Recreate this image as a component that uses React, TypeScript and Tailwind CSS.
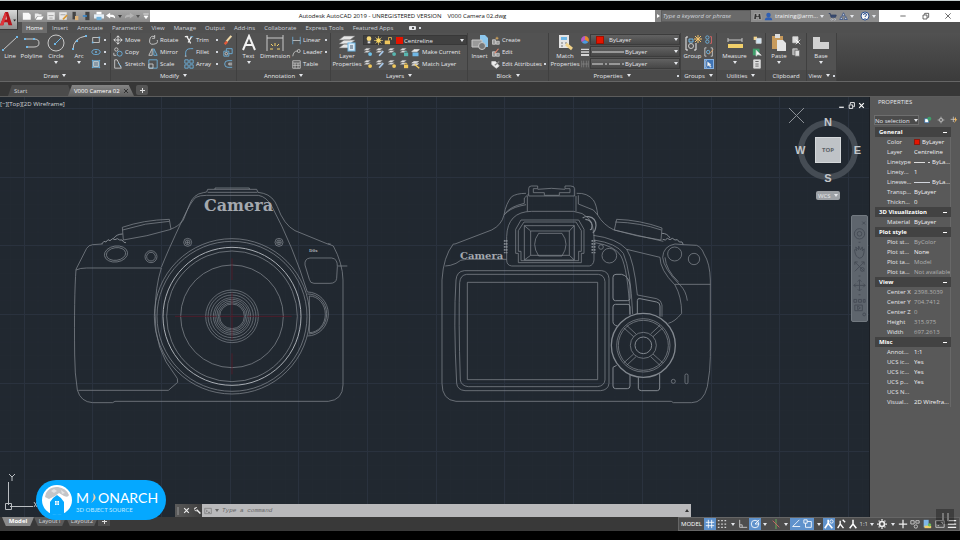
import type { ReactNode } from "react";

const Caret = ({ className = "text-gray-200" }: { className?: string }) => (
  <svg viewBox="0 0 4 3" className={`w-1 h-[3px] shrink-0 ${className}`} aria-hidden="true">
    <path d="M0 0H4L2 3Z" fill="currentColor" />
  </svg>
);

const Icon = ({ children, className = "size-3" }: { children: ReactNode; className?: string }) => (
  <svg viewBox="0 0 12 12" className={`shrink-0 ${className}`} fill="none" stroke="#d4d4d4" strokeWidth="1" aria-hidden="true">
    {children}
  </svg>
);

const BigIcon = ({ children }: { children: ReactNode }) => (
  <svg viewBox="0 0 18 18" className="size-[18px] shrink-0" fill="none" stroke="#c8c8c8" strokeWidth="1" aria-hidden="true">
    {children}
  </svg>
);

/* ---------- ribbon building blocks ---------- */

function Panel({ title, width, arrow = true, corner = false, children }: { title: string; width: string; arrow?: boolean; corner?: boolean; children: ReactNode }) {
  return (
    <section className={`${width} shrink-0 flex flex-col bg-[#525252] border-r border-[#404040]`}>
      <div className="flex h-[38px] pt-px">{children}</div>
      <button className={`relative flex items-center justify-center gap-1 h-[11px] bg-[#4a4a4a] text-gray-200 ${corner ? "pr-[5px]" : ""}`}>
        {title}
        {arrow && <Caret />}
        {corner && <span className="absolute right-px size-[2px] bg-gray-300" />}
      </button>
    </section>
  );
}

function BigButton({ icon, lines, arrow = false, width }: { icon: ReactNode; lines: string[]; arrow?: boolean; width: string }) {
  return (
    <button className={`${width} shrink-0 flex flex-col items-center whitespace-nowrap`}>
      {icon}
      {lines.map((line) => (
        <span key={line} className="leading-[8px]">{line}</span>
      ))}
      {arrow && <Caret className="mt-px text-gray-200" />}
    </button>
  );
}

function SmallButton({ icon, label, arrow = false }: { icon: ReactNode; label?: string; arrow?: boolean }) {
  return (
    <button className="flex items-center gap-[2px] h-3 whitespace-nowrap" aria-label={label ?? "tool"}>
      {icon}
      {label && <span className="flex-1 text-left">{label}</span>}
      {arrow && <span className="w-1 flex justify-center"><span className="size-[2px] bg-gray-300" /></span>}
    </button>
  );
}

const Column = ({ children, className = "" }: { children: ReactNode; className?: string }) => (
  <div className={`flex flex-col shrink-0 ${className}`}>{children}</div>
);

const B = "#6fb7e6";

const Dot = ({ x, y }: { x: number; y: number }) => <rect x={x - 1} y={y - 1} width="2" height="2" fill={B} stroke="none" />;

function LayerTool({ accent, kind = 0 }: { accent: string; kind?: number }) {
  return (
    <button className="size-3" aria-label="Layer tool">
      <Icon className="size-[10px]">
        <path d="M1 4L4 1.500H9L6 4Z M1 6.500L4 4.500H9L6 6.500Z" fill="#e2e2e2" stroke="#777" strokeWidth=".4" />
        {kind === 0 && <circle cx="8.500" cy="8.500" r="2.300" fill={accent} stroke="none" />}
        {kind === 1 && <path d="M5 10.500L10 5" stroke={accent} strokeWidth="2" />}
        {kind === 2 && <><rect x="6" y="7" width="5" height="4" fill={accent} stroke="none" /><path d="M7 7V5.500H9.500V7" stroke={accent} /></>}
      </Icon>
    </button>
  );
}

/* ---------- title bar ---------- */

const tabs = ["Home", "Insert", "Annotate", "Parametric", "View", "Manage", "Output", "Add-ins", "Collaborate", "Express Tools", "Featured Apps"];

function Header() {
  return (
    <header className="flex h-[23px] bg-[#505050]">
      <button className="w-[18px] h-[20px] shrink-0 bg-linear-to-b from-[#d9d9d9] to-[#8e8e8e] border-r border-b border-[#3a3a3a]" aria-label="Application menu">
        <svg viewBox="0 0 18 20" className="w-[17px] h-[19px]" aria-hidden="true">
          <path d="M0 16L5.500 2H8.500L13 16H9L8 13H4.500L3.500 16Z" fill="#b3141b" />
          <path d="M5.500 10H7.500L6.500 6Z" fill="#d4d4d4" />
          <path d="M0 16L5.500 2L7 5L3.500 16Z" fill="#e0343a" />
          <path d="M14 10H17L15.500 12Z" fill="#222" />
        </svg>
      </button>
      <div className="flex-1 min-w-0 flex flex-col">
        <div className="flex h-3 bg-white">
          <div className="w-[132px] shrink-0 flex items-center gap-[2px] pl-1 bg-linear-to-b from-[#a8a8a8] to-[#8a8a8a]">
            <Icon className="size-[10px]"><path d="M1 2H8L10.500 4.500V10.500H1Z" fill="#f8f8f8" stroke="none" /></Icon>
            <Icon className="size-[10px]"><path d="M1 10V3H5L6 4H9V6H4Z" fill="#ececec" stroke="none" /><path d="M2 10.500L4.500 6.500H11.500L9 10.500Z" fill="#fff" stroke="none" /></Icon>
            <Icon className="size-[10px]"><path d="M1.500 1.500H10.500V10.500H1.500Z" fill="#e8e8e8" stroke="none" /><path d="M3 5.500H9 M4 8.500H8" stroke="#999" /></Icon>
            <Icon className="size-[10px]"><path d="M1.500 1.500H10.500V10.500H1.500Z" fill="#e8e8e8" stroke="none" /><path d="M3 4.500H9" stroke="#999" /><path d="M6 10L11 5" stroke="#d99a35" strokeWidth="2" /></Icon>
            <Icon className="size-[10px]"><path d="M3 1H7V10H3Z" fill="#444" stroke="none" /><path d="M6 6H10V11H6Z" fill="#dcb27a" stroke="none" /></Icon>
            <Icon className="size-[10px]"><path d="M4 1H9V11H4Z" fill="#444" stroke="none" /><path d="M1 6H6" stroke="#3a87c8" strokeWidth="2" /></Icon>
            <Icon className="size-[10px]"><path d="M3 1H9V4H3Z" fill="#fff" stroke="none" /><path d="M0 4H12V9H0Z" fill="#e4eef5" stroke="none" /><path d="M3 7H9V11H3Z" fill="#6fb0da" stroke="none" /></Icon>
            <Icon className="size-[10px]"><path d="M0 5.500L5 2V4.500H8Q11 5 11 9Q9.500 7 5 7V9Z" fill="#fff" stroke="none" /></Icon>
            <Caret className="text-[#444]" />
            <Icon className="size-[10px]"><path d="M12 5.500L7 2V4.500H4Q1 5 1 9Q2.500 7 7 7V9Z" fill="#b4b4b4" stroke="none" /></Icon>
            <Caret className="text-[#555]" />
            <Icon className="size-2"><path d="M2 3H10 M3 6H9L6 10Z" fill="#fff" stroke="#fff" /></Icon>
          </div>
          <div className="flex-1 flex items-center justify-center gap-[6px] text-[#111] whitespace-nowrap">
            <span>Autodesk AutoCAD 2019 - UNREGISTERED VERSION</span>
            <span>V000 Camera 02.dwg</span>
          </div>
          <span className="w-[6px] shrink-0 flex items-center justify-center bg-[#858585]">
            <svg viewBox="0 0 3 4" className="w-[3px] h-1" aria-hidden="true"><path d="M0 0V4L3 2Z" fill="#fff" /></svg>
          </span>
          <input
            aria-label="Search help"
            placeholder="Type a keyword or phrase"
            className="w-[90px] shrink-0 px-px italic bg-[#6a6a6a] border border-[#5c5c5c] placeholder:text-gray-300 placeholder:opacity-100"
          />
          <div className="w-[128px] shrink-0 flex items-center gap-[2px] pl-[2px] bg-[#8c8c8c] text-gray-100">
            <Icon className="size-[9px]"><path d="M2 2H5V5H7V2H10L11 10H7.500V7H4.500V10H1Z" fill="#333" stroke="#ddd" strokeWidth=".6" /></Icon>
            <Icon className="size-[9px]"><circle cx="6" cy="4" r="3" fill="#2f5fb3" stroke="none" /><path d="M1 11Q1 7 6 7T11 11Z" fill="#2f5fb3" stroke="none" /></Icon>
            <span>training@arm...</span>
            <Caret />
            <span className="flex items-center gap-[2px] pl-[2px]">
              <Icon className="size-[9px]"><path d="M1 2H3L4 7H10L11 4H3.500" fill="#3c4e74" stroke="#2c3d60" /><circle cx="5" cy="10" r="1" fill="#2c3d60" /><circle cx="9" cy="10" r="1" fill="#2c3d60" /></Icon>
              <Icon className="size-[9px]"><path d="M6 1L8 5H4Z M3 6L5 10H1Z M9 6L11 10H7Z" stroke="#2c4a80" fill="#d6dce8" /></Icon>
              <Caret />
            </span>
            <svg viewBox="0 0 10 10" className="size-[10px] shrink-0 ml-1" aria-hidden="true">
              <circle cx="5" cy="5" r="4" fill="#f4f4f4" stroke="#2b4f8e" />
              <path d="M3.500 4Q3.500 2.500 5 2.500T6.500 4Q6.500 4.800 5 5.500V6 M5 7V8" fill="none" stroke="#2b4f8e" />
            </svg>
            <Caret />
          </div>
          <div className="w-[81px] shrink-0 flex items-center justify-between pl-5 pr-2">
            <button aria-label="Minimize" className="size-2"><Icon className="size-2"><path d="M2 6H10" stroke="#222" /></Icon></button>
            <button aria-label="Restore" className="size-2"><Icon className="size-2"><path d="M1.500 4.500H7.500V10.500H1.500Z M4 4V2H10V8H8" stroke="#222" /></Icon></button>
            <button aria-label="Close" className="size-2"><Icon className="size-2"><path d="M2 2L10 10M10 2L2 10" stroke="#222" /></Icon></button>
          </div>
        </div>
        <nav className="flex h-[11px] items-stretch pl-1 text-gray-300">
          {tabs.map((tab, i) => (
            <button key={tab} className={i === 0 ? "px-1 bg-[#6c6c6c] text-white" : "pl-[5px] pr-1"}>{tab}</button>
          ))}
          <button aria-label="Ribbon display" className="flex items-center gap-[3px] pl-3">
            <span className="w-[7px] h-1 rounded-[1px] bg-gray-200 flex items-center justify-center"><span className="size-[2px] bg-[#555]" /></span>
            <span className="size-[2px] bg-gray-300" />
          </button>
        </nav>
      </div>
    </header>
  );
}

function LineCombo({ label, dash }: { label: string; dash?: string }) {
  return (
    <div className="relative flex items-center h-[11px]">
      <select aria-label={dash ? "Linetype" : "Lineweight"} className="appearance-none w-full h-[11px] pl-[34px] bg-linear-to-b from-[#626262] to-[#474747] border border-[#3c3c3c] text-gray-200">
        <option>{label}</option>
      </select>
      <svg viewBox="0 0 32 2" className="absolute left-[2px] w-8 h-[2px]" aria-hidden="true"><path d="M0 1H32" stroke="#ddd" strokeDasharray={dash} /></svg>
      <span className="absolute right-[2px]"><Caret /></span>
    </div>
  );
}

function Ribbon() {
  return (
    <div className="flex h-[49px] bg-linear-to-b from-[#515151] to-[#3b3b3b] border-b border-[#666] text-gray-200 overflow-hidden">
      <Panel title="Draw" width="w-[111px]">
        <BigButton width="w-5" lines={["Line"]} icon={<BigIcon><path d="M2 16L16 3" /><Dot x={2} y={16} /><Dot x={16} y={3} /></BigIcon>} />
        <BigButton width="w-[23px]" lines={["Polyline"]} icon={<BigIcon><path d="M2 5H11Q16 5 16 9T11 13H4" /><Dot x={2} y={5} /><Dot x={11} y={5} /><Dot x={4} y={13} /></BigIcon>} />
        <BigButton width="w-[26px]" arrow lines={["Circle"]} icon={<BigIcon><circle cx="9" cy="9" r="8" /><path d="M8 10L14 4" stroke={B} /><Dot x={8} y={10} /></BigIcon>} />
        <BigButton width="w-5" arrow lines={["Arc"]} icon={<BigIcon><path d="M3 16Q3 4 16 2" /><Dot x={3} y={15} /><Dot x={7} y={7} /><Dot x={16} y={2} /></BigIcon>} />
        <Column className="pl-[2px]">
          <SmallButton arrow icon={<Icon className="size-[10px]"><path d="M2 3H10V9H2Z" /><Dot x={2} y={9} /><Dot x={10} y={3} /></Icon>} />
          <SmallButton arrow icon={<Icon className="size-[10px]"><ellipse cx="6" cy="6" rx="5" ry="3" stroke={B} /><Dot x={6} y={6} /></Icon>} />
          <SmallButton arrow icon={<Icon className="size-[10px]"><path d="M3 3H9V9H3Z" fill="#8a9aa6" /><path d="M1 2H11M1 10H11M2 1V11M10 1V11" stroke={B} /></Icon>} />
        </Column>
      </Panel>

      <Panel title="Modify" width="w-[126px]">
        <Column className="pl-[2px] w-[37px]">
          <SmallButton label="Move" icon={<Icon className="size-[10px]"><path d="M6 1V11M1 6H11M4 3L6 1L8 3M4 9L6 11L8 9M3 4L1 6L3 8M9 4L11 6L9 8" stroke="#eee" /></Icon>} />
          <SmallButton label="Copy" icon={<Icon className="size-[10px]"><circle cx="4" cy="3" r="2" /><circle cx="8" cy="8" r="3" stroke={B} /><path d="M1 7V10H4" /></Icon>} />
          <SmallButton label="Stretch" icon={<Icon className="size-[10px]"><path d="M2 1V11H10L5 1Z" /><path d="M6 5L10 9" stroke={B} /></Icon>} />
        </Column>
        <Column className="w-9">
          <SmallButton label="Rotate" icon={<Icon className="size-[10px]"><path d="M8 2Q3 0 2 6T7 11T11 6M8 0V4H5" /></Icon>} />
          <SmallButton label="Mirror" icon={<Icon className="size-[10px]"><path d="M5 2V10H1Z" /><path d="M7 2V10H11Z" stroke={B} /></Icon>} />
          <SmallButton label="Scale" icon={<Icon className="size-[10px]"><path d="M1 1H11V11H1Z" stroke={B} /><path d="M1 6H6V11H1Z" /></Icon>} />
        </Column>
        <Column className="w-[35px]">
          <SmallButton label="Trim" arrow icon={<Icon className="size-[10px]"><path d="M1 2H5M3 1L8 10M9 2L5 9" stroke="#eee" strokeWidth="1.500" /><path d="M8 2H11" stroke={B} /></Icon>} />
          <SmallButton label="Fillet" arrow icon={<Icon className="size-[10px]"><path d="M2 11V7Q2 2 8 2H11" stroke={B} /><path d="M1 11H3" /></Icon>} />
          <SmallButton label="Array" arrow icon={<Icon className="size-[10px]"><path d="M1 1H5V5H1ZM7 1H11V5H7ZM1 7H5V11H1ZM7 7H11V11H7Z" stroke={B} /></Icon>} />
        </Column>
        <Column className="pl-1">
          <SmallButton icon={<Icon className="size-[10px]"><path d="M4 8L10 1" stroke="#f0d9a8" strokeWidth="2.500" /><path d="M2 11L5 8" stroke="#e05a3a" strokeWidth="3" /></Icon>} />
          <SmallButton icon={<Icon className="size-[10px]"><path d="M1 5H7V11H1ZM4 5V2H11V8H7" stroke={B} /><circle cx="4" cy="8" r="1.500" /></Icon>} />
          <SmallButton icon={<Icon className="size-[10px]"><path d="M11 2H6Q2 2 2 6T6 10H11" stroke={B} /><path d="M11 5H7V7H11" /></Icon>} />
        </Column>
      </Panel>

      <Panel title="Annotation" width="w-[94px]">
        <BigButton width="w-[23px]" arrow lines={["Text"]} icon={<BigIcon><path d="M3 16L9 2L15 16M5 11H13" stroke="#f2f2f2" strokeWidth="2" /></BigIcon>} />
        <BigButton width="w-[30px]" lines={["Dimension"]} icon={<BigIcon><path d="M1 1V17M17 1V17M1 4H17" /><path d="M4 15H7M11 15H14M9 9V12M5 10L7 12M13 10L11 12" stroke="#f2d06a" /></BigIcon>} />
        <Column className="pl-[2px] w-[38px]">
          <SmallButton label="Linear" arrow icon={<Icon className="size-[9px]"><path d="M1 1V11M11 1V11" stroke={B} /><path d="M1 6H11" /></Icon>} />
          <SmallButton label="Leader" arrow icon={<Icon className="size-[9px]"><path d="M1 11Q2 4 7 4" /><circle cx="9" cy="4" r="2" /></Icon>} />
          <SmallButton label="Table" icon={<Icon className="size-[9px]"><path d="M1 1H11V11H1ZM1 4H11M1 7H11M4 4V11M8 4V11" /></Icon>} />
        </Column>
      </Panel>

      <Panel title="Layers" width="w-[137px]">
        <BigButton
          width="w-8"
          lines={["Layer", "Properties"]}
          icon={<BigIcon><path d="M1 6L6 2H17L12 6ZM1 10L6 6H17L12 10ZM1 14L6 10H17L12 14Z" fill="#e6e6e6" stroke="#777" strokeWidth=".6" /><rect x="10" y="9" width="7" height="8" fill="#dbe9f4" stroke={B} /><path d="M12 12H15M12 14H15" stroke="#456" /></BigIcon>}
        />
        <Column className="w-[104px]">
          <div className="relative flex items-center h-3">
            <select aria-label="Layer" className="appearance-none w-full h-[10px] pl-10 bg-[#404040] border border-[#383838] text-gray-200">
              <option>Centreline</option>
            </select>
            <span className="absolute left-[2px] flex items-center gap-px pointer-events-none">
              <Icon className="size-2"><circle cx="6" cy="4" r="3.500" fill="#f6d878" stroke="none" /><path d="M4 8H8V11H4Z" fill="#ddd" stroke="none" /></Icon>
              <Icon className="size-[9px]"><circle cx="6" cy="6" r="3" fill="#f6d03e" stroke="none" /><path d="M6 0V12M0 6H12M2 2L10 10M10 2L2 10" stroke="#f6d878" strokeWidth=".8" /></Icon>
              <Icon className="size-[9px]"><rect x="1" y="6" width="7" height="5" fill="#f0c65c" stroke="none" /><path d="M6 6V2H10V5" stroke="#f0c65c" /></Icon>
              <span className="ml-[2px] size-[7px] bg-[#e51400]" />
            </span>
            <span className="absolute right-[3px] pointer-events-none"><Caret /></span>
          </div>
          <div className="flex h-3">
            <LayerTool accent="#6fc3ea" /><LayerTool accent="#a7c7e8" kind={1} /><LayerTool accent="#58b7b0" /><LayerTool accent="#58b7b0" kind={2} />
            <SmallButton label="Make Current" icon={<Icon className="size-[9px]"><path d="M1 5L4 2H11L8 5Z" fill="#e8e8e8" /><path d="M2 6H10V11H2Z" fill={B} stroke="none" /></Icon>} />
          </div>
          <div className="flex h-3">
            <LayerTool accent="#f2c95c" /><LayerTool accent="#a7c7e8" kind={1} /><LayerTool accent="#f2c95c" /><LayerTool accent="#f2c95c" kind={2} />
            <SmallButton label="Match Layer" icon={<Icon className="size-[9px]"><path d="M1 4L4 2H10L7 4ZM1 7L4 5H10L7 7Z" fill="#ddd" /><path d="M5 6L11 11" stroke="#f2c95c" strokeWidth="2" /></Icon>} />
          </div>
        </Column>
      </Panel>

      <Panel title="Block" width="w-[81px]">
        <BigButton width="w-[23px]" lines={["Insert"]} icon={<BigIcon><path d="M9 1H14L17 4V13H9Z" fill="#8cc6ec" stroke="none" /><path d="M1 6H11V13H1Z" fill="#9a9a9a" /><circle cx="11" cy="12" r="3.500" fill="#777" /></BigIcon>} />
        <Column className="w-[55px]">
          <SmallButton label="Create" icon={<Icon className="size-[9px]"><path d="M2 5H6V11H2ZM7 7H11V11H7Z" fill="#999" /><path d="M8 1V5M6 3H10" stroke="#f2b75c" /></Icon>} />
          <SmallButton label="Edit" icon={<Icon className="size-[9px]"><path d="M2 5H6V11H2ZM7 7H11V11H7Z" fill="#999" /><path d="M5 7L10 1" stroke="#e8836a" strokeWidth="1.500" /></Icon>} />
          <SmallButton label="Edit Attributes" arrow icon={<Icon className="size-[9px]"><path d="M1 2H6L11 8L7 11L1 6Z" fill="#eee" /><path d="M5 7L11 2" stroke="#888" strokeWidth="1.500" /></Icon>} />
        </Column>
      </Panel>

      <Panel title="Properties" width="w-[132px]" corner>
        <BigButton width="w-8" lines={["Match", "Properties"]} icon={<BigIcon><path d="M3 1H13V14H3Z" fill="#e4e4e4" stroke="none" /><path d="M5 3H11V6H5Z" fill={B} stroke="none" /><path d="M5 9H7M9 9H11M5 12H7" stroke="#777" /><path d="M10 10L16 15" stroke="#f2d38a" strokeWidth="3" /></BigIcon>} />
        <Column className="w-[9px]">
          <SmallButton icon={<Icon className="size-2"><path d="M6 6V0A6 6 0 0 1 11 9Z" fill="#e58a2c" stroke="none" /><path d="M6 6L11 9A6 6 0 0 1 1 9Z" fill="#4b9be0" stroke="none" /><path d="M6 6L1 9A6 6 0 0 1 6 0Z" fill="#b65cc8" stroke="none" /></Icon>} />
          <SmallButton icon={<Icon className="size-2"><path d="M0 2H12M0 6H12" strokeWidth="2" /><path d="M0 10.500H12" strokeWidth="3" /></Icon>} />
          <SmallButton icon={<Icon className="size-2"><path d="M1 1V11M4 1V11M8 1V11M11 1V11M1 6H11" stroke="#888" /></Icon>} />
        </Column>
        <Column className="w-[90px] gap-px">
          <div className="relative flex items-center h-[11px]">
            <select aria-label="Object color" className="appearance-none w-full h-[11px] pl-[18px] bg-linear-to-b from-[#626262] to-[#474747] border border-[#3c3c3c] text-gray-200">
              <option>ByLayer</option>
            </select>
            <span className="absolute left-[6px] size-2 bg-[#e51400] border border-[#a01000]" />
            <span className="absolute right-[2px]"><Caret /></span>
          </div>
          <LineCombo label="ByLayer" />
          <LineCombo label="ByLayer" dash="11 2 2 2" />
        </Column>
      </Panel>

      <Panel title="Groups" width="w-9">
        <BigButton width="w-[23px]" lines={["Group"]} icon={<BigIcon><path d="M4 3H2V16H4M12 9V16H10" stroke="#eee" /><path d="M5 5H9V8H5Z" stroke={B} /><circle cx="7" cy="12" r="2.500" /><path d="M14 1V9M10 5H18M11 2L17 8M17 2L11 8" stroke="#f2c26a" /></BigIcon>} />
        <Column>
          <SmallButton icon={<Icon className="size-[10px]"><circle cx="4" cy="3" r="2" stroke={B} /><circle cx="4" cy="8" r="2" stroke={B} /><path d="M7 2H9V10H7" stroke="#d66" /></Icon>} />
          <SmallButton icon={<Icon className="size-[10px]"><path d="M3 1H1V11H3M8 1H10V11H8" /><circle cx="5" cy="6" r="2" stroke={B} /><path d="M6 9L11 3" stroke="#e8a05a" /></Icon>} />
          <SmallButton icon={<span className="bg-[#3f74b5] border border-[#86b0e0]"><Icon className="size-2"><path d="M3 1H1V11H3" /><path d="M4 3V9L6 8L8 11L9 10L7 7H9Z" fill="#fff" /></Icon></span>} />
        </Column>
      </Panel>

      <Panel title="Utilities" width="w-[49px]">
        <BigButton width="w-[35px]" arrow lines={["Measure"]} icon={<BigIcon><path d="M2 4V8M16 4V8M2 6H16" /><rect x="2" y="10" width="15" height="4" fill="#f2d06a" stroke="none" /></BigIcon>} />
        <Column>
          <SmallButton icon={<Icon className="size-[10px]"><path d="M2 2H6V6H2Z" fill="#f2d38a" stroke="none" /><path d="M5 4H11V10H5Z" fill="#cfe3f2" /></Icon>} />
          <SmallButton icon={<Icon className="size-[10px]"><path d="M1 2H9V10H1Z" fill="#3f9e6a" stroke="none" /><path d="M5 4V11L7 9L11 10Z" fill="#fff" /></Icon>} />
          <SmallButton icon={<Icon className="size-[10px]"><path d="M2 1H10V11H2Z" fill="#ddd" /><path d="M4 3H8M4 6H8M4 8.500H8" stroke="#555" /></Icon>} />
        </Column>
      </Panel>

      <Panel title="Clipboard" width="w-[41px]" arrow={false}>
        <BigButton width="w-[26px]" arrow lines={["Paste"]} icon={<BigIcon><rect x="2" y="2" width="11" height="13" fill="#c79a5c" stroke="none" /><rect x="5" y="0" width="5" height="4" fill="#ddd" stroke="none" /><path d="M7 6H13L16 9V17H7Z" fill="#e4e4e4" stroke="none" /></BigIcon>} />
        <Column>
          <SmallButton icon={<Icon className="size-[9px]"><path d="M1 1H8V9H1Z" fill="#ddd" /><path d="M5 5L11 11M11 5L5 11" stroke="#fff" /></Icon>} />
          <SmallButton icon={<Icon className="size-[9px]"><path d="M1 1H7V9H1Z" fill="#aaa" /><path d="M4 3H10V11H4Z" fill="#ddd" stroke="#666" /></Icon>} />
        </Column>
      </Panel>

      <Panel title="View" width="w-[30px]" corner>
        <BigButton width="w-7" arrow lines={["Base"]} icon={<BigIcon><path d="M1 3H8V8H17V15H1Z" fill="#d2d2d2" stroke="none" /></BigIcon>} />
      </Panel>
    </div>
  );
}

function FileTabs() {
  return (
    <div className="flex h-[15px] items-end pl-2 bg-[#373737] border-b border-[#5c5c5c]">
      <button className="w-16 h-[11px] pl-[6px] text-left text-gray-300 bg-[#4b4b4b] [clip-path:polygon(6%_0,94%_0,100%_100%,0_100%)]">Start</button>
      <div className="w-[66px] h-[11px] -ml-1 flex items-center justify-between pl-[6px] pr-[6px] bg-linear-to-b from-[#858585] to-[#626262] text-white [clip-path:polygon(6%_0,92%_0,100%_100%,0_100%)]">
        <span className="whitespace-nowrap">V000 Camera 02</span>
        <button aria-label="Close tab" className="shrink-0"><svg viewBox="0 0 4 4" className="size-1"><path d="M0 0L4 4M4 0L0 4" stroke="#333" /></svg></button>
      </div>
      <button aria-label="New tab" className="w-3 h-[10px] mb-px ml-[2px] flex items-center justify-center rounded-xs bg-[#555]">
        <svg viewBox="0 0 5 5" className="size-[5px]"><path d="M2.500 0V5M0 2.500H5" stroke="#ddd" /></svg>
      </button>
    </div>
  );
}

/* ---------- model space ---------- */

const gridX = [24, 92, 161, 230, 298, 367, 436, 504, 573, 642, 711, 779, 848];
const gridY = [11, 80, 148, 217, 286, 354];
const screws = [383, 657];
const lensRings = [79, 72, 64, 56, 51, 46, 41, 37];

function FrontView() {
  return (
    <g transform="translate(60 73) scale(.33333)" strokeWidth="2.200">
      <path d="M128 222L98 224Q86 225 80 235L48 298Q42 380 44 555Q44 610 52 660Q62 696 98 698H158L165 694H805Q848 690 849 645V330Q848 280 820 228L803 221" />
      <path d="M333 177Q355 170 370 150Q378 130 388 105Q400 72 430 68L440 66L443 58H590L594 67L610 70Q640 78 652 110Q672 165 705 182L803 222L812 222" />
      <path d="M443 67H592M465 58V54H568V58" />
      <path d="M304 292Q320 250 368 148Q395 90 408 82Q418 76 440 76H595Q620 80 636 110Q700 230 742 366" />
      <path d="M187 172Q250 150 328 148L333 178Q260 200 190 210ZM188 180Q255 158 328 154" />
      <path d="M125 222L132 214L138 216L144 209L150 212L158 206L165 209L172 206L179 210L186 210L192 217L198 218M160 206Q170 192 188 192" strokeWidth="3" />
      <path d="M48 300Q60 294 80 294H304M55 661H325L353 637Q355 625 345 615Q283 540 285 430Q286 350 304 294" />
      <ellipse cx="168" cy="252" rx="35" ry="24" transform="rotate(-8 168 252)" />
      <ellipse cx="168" cy="252" rx="29" ry="19" transform="rotate(-8 168 252)" />
      <circle cx="273" cy="260" r="18" />
      <circle cx="273" cy="260" r="13" />
      {screws.map((x) => (
        <g key={x}>
          <circle cx={x} cy="217" r="12" />
          <circle cx={x} cy="217" r="7" />
          <path d={`M${x - 6} 217H${x + 6}M${x} 211V223`} />
        </g>
      ))}
      <circle cx="516" cy="439" r="233" />
      <circle cx="516" cy="439" r="225" />
      <circle cx="516" cy="439" r="207" stroke="#a9aeb4" strokeWidth="3" />
      <circle cx="516" cy="439" r="196" />
      <circle cx="516" cy="439" r="154" />
      {lensRings.map((r) => <circle key={r} cx="516" cy="439" r={r} strokeWidth="2" />)}
      <path d="M750 264H815Q833 266 832 290L830 325Q828 340 810 340H762Q750 340 748 328L735 285Q733 266 750 264ZM833 288H862" />
      <path d="M742 366A63 66 0 0 1 742 498M748 378A48 55 0 0 1 748 488ZM742 372A56 60 0 0 1 746 492" />
      <path d="M516 265V330M516 368V510M516 550V613M345 439H470M480 439H552M562 439H695" stroke="#5f1a28" />
    </g>
  );
}

function BackView() {
  return (
    <g transform="translate(430 73) scale(.33333)" strokeWidth="2.200">
      <path d="M222 135Q215 165 185 180L75 222H70Q40 260 36 330V640Q36 690 78 694H724L730 698H785Q820 698 832 650Q841 600 841 560V330Q840 280 822 252Q815 232 800 226L760 224" />
      <path d="M222 135Q228 100 245 80Q260 70 288 70M222 135Q240 115 270 108L288 104M226 130Q240 110 283 100V84L296 72M440 70Q472 68 490 90Q500 105 503 135Q520 165 552 180L700 214M445 76V102L490 120L503 135" />
      <path d="M292 78V124M438 78V124M296 78V56Q296 48 304 48H323V56H310V68H343V76H388V68H420V56H405V48H422Q434 48 434 56V78ZM323 58Q365 52 405 58" />
      <path d="M245 288Q230 286 230 270V200Q232 125 305 124H430Q490 130 492 195V270Q490 286 478 288Z" />
      <path d="M273 150H446L462 178V250H454V278H265V250H257V178ZM282 156H438L454 182V244H446V272H273V244H265V182Z" />
      <path d="M283 167H433V270H283ZM302 183H418V256H302ZM283 167L302 183M433 167L418 183M433 270L418 256M283 270L302 256M326 190H396Q420 222 396 258H326Q302 222 326 190" />
      <path d="M224 210V250M230 210V250M487 210V250M494 210V250" strokeDasharray="5 4" strokeWidth="5" />
      <path d="M458 144Q466 138 476 140Q498 144 498 166Q496 186 488 188M466 148Q486 150 486 166T480 178" strokeWidth="3.500" />
      <path d="M46 288Q60 288 78 280Q90 268 110 268H230" />
      <path d="M103 302H515Q535 304 537 325V640Q535 660 512 662H105Q82 660 80 640Q70 450 78 330Q80 304 103 302ZM110 313H505Q523 315 525 335V630Q523 648 502 650H115Q94 648 91 630Q85 450 89 338Q91 315 110 313Z" />
      <path d="M112 337H503V629H112Z" />
      <path d="M490 196Q560 205 590 238Q612 270 622 375L680 386Q694 390 696 405V440M492 210Q560 220 580 250Q602 300 608 432M496 218Q556 228 573 258Q594 300 600 432" />
      <circle cx="513" cy="231" r="7" />
      <circle cx="538" cy="257" r="22" />
      <path d="M553 180L560 148Q630 150 696 174L693 210Q620 200 553 180ZM556 156Q630 158 694 180M590 238L690 262Q690 300 735 345Q755 380 755 430Q735 455 715 460" />
      <path d="M696 190Q712 190 720 204M698 208L706 210L712 205L720 209L727 205L735 210L742 209L748 216L756 216L760 224" strokeWidth="3" />
      <path d="M772 392Q768 362 750 345Q700 295 698 262Q700 228 735 222L760 224M705 262Q708 300 745 335M735 343H841" />
      <circle cx="734" cy="252" r="21" />
      <circle cx="792" cy="267" r="17" />
      <path d="M558 313H575Q596 318 600 345V385Q600 392 592 392H556Q549 392 549 384V322Q549 313 558 313ZM562 468Q549 465 549 455V411Q549 403 556 403H594Q600 404 600 411V436M560 586L549 592V648Q549 656 557 656H592Q600 656 600 648V614M625 622V655Q626 662 634 662H682Q689 661 689 654V612" strokeWidth="3" />
      <path d="M622 432V392Q622 384 630 386L680 396Q690 398 690 408V440" strokeWidth="3" />
      <circle cx="640" cy="526" r="96" strokeWidth="4" />
      <circle cx="640" cy="526" r="80" />
      <circle cx="640" cy="526" r="75" />
      <circle cx="640" cy="526" r="39" />
      <circle cx="640" cy="526" r="25" strokeWidth="3" />
      <path d="M582 474L611 500M590 466L618 492M698 474L669 500M690 466L662 492M582 578L611 552M590 586L618 560M698 578L669 552M690 586L662 560" />
      <circle cx="730" cy="634" r="6" />
      <rect x="765" y="612" width="9" height="29" rx="4" />
    </g>
  );
}

function Drawing() {
  return (
    <svg viewBox="0 0 869 420" preserveAspectRatio="xMinYMin slice" className="absolute inset-0 size-full" role="img" aria-label="Camera front and back views">
      <defs>
        <pattern id="minor" width="13.740" height="13.740" patternUnits="userSpaceOnUse" x="10" y="11">
          <path d="M0 0H13.740M0 0V13.740" stroke="#242b35" strokeWidth=".6" fill="none" />
        </pattern>
      </defs>
      <rect width="869" height="420" fill="url(#minor)" />
      <g stroke="#2a323e">
        {gridX.map((x) => <path key={x} d={`M${x}.500 0V420`} />)}
        {gridY.map((y) => <path key={y} d={`M0 ${y}.500H869`} />)}
      </g>
      <g fill="none" stroke="#82888f">
        <FrontView />
        <BackView />
      </g>
      <g fill="#a4a9af" fontFamily="DejaVu Serif, serif" fontWeight="700">
        <text x="204" y="114" fontSize="16">Camera</text>
        <text x="460" y="162" fontSize="10">Camera</text>
        <text x="309" y="155" fontSize="4">D0x</text>
      </g>
      {/* UCS icon */}
      <path d="M8.500 408V385M10 409.500H33M5.500 406.500H11.500V412.500H5.500Z" stroke="#b9bdc1" fill="none" />
      <path d="M9 377L12 380L15 377M12 380V384" stroke="#b9bdc1" fill="none" />
      <path d="M34 405L37 410M37 405L34 410" stroke="#b9bdc1" fill="none" />
      <path d="M789 11L804 26M804 11L789 26" stroke="#8b9096" fill="none" />
    </svg>
  );
}

function ViewCube() {
  return (
    <div className="absolute right-2 top-5 w-[66px] flex flex-col items-center">
      <div className="relative size-[66px] grid place-items-center">
        <svg viewBox="0 0 66 66" className="absolute inset-0 size-full" aria-hidden="true">
          <circle cx="33" cy="33" r="27" fill="none" stroke="#454c54" strokeWidth="6" />
        </svg>
        <button className="relative size-[26px] bg-[#bfc3c7] border border-[#d5d8da] text-[#5a5f65] font-bold">TOP</button>
        <div className="absolute inset-0 grid grid-cols-3 grid-rows-3 place-items-center font-['Liberation_Sans',sans-serif] text-[11px] leading-[10px] font-bold text-[#c3c7ca]">
          <span className="col-start-2 row-start-1 self-start">N</span>
          <span className="col-start-1 row-start-2 justify-self-start">W</span>
          <span className="col-start-3 row-start-2 justify-self-end">E</span>
          <span className="col-start-2 row-start-3 self-end">S</span>
        </div>
      </div>
      <button className="mt-2 w-6 h-[9px] flex items-center justify-between px-[2px] rounded-xs bg-[#9da1a6] text-[#e6e8ea]">
        WCS <Caret />
      </button>
    </div>
  );
}

function NavBar() {
  return (
    <div className="absolute right-px top-[118px] w-[17px] h-[107px] rounded-xs bg-[#5e656d] border border-[#727980]">
      <svg viewBox="0 0 16 106" className="size-full" fill="none" stroke="#444b54" aria-hidden="true">
        <path d="M11 3L14 6M14 3L11 6" />
        <circle cx="8" cy="16" r="5.500" />
        <circle cx="8" cy="16" r="2.500" />
        <path d="M3 35Q2 31 5 34L4 30L7 33V29L9 33L11 30V34L13 32Q13 42 8 42Q4 41 3 35Z" />
        <path d="M3 46L13 56M13 46L3 56M3 49V46H6M10 46H13V49" />
        <circle cx="11" cy="54" r="2" />
        <path d="M8 65V77M2 71H14M6 67L8 65L10 67M6 75L8 77L10 75M4 69L2 71L4 73M12 69L14 71L12 73" />
        <path d="M2 86H5V89H2ZM7 86H10V89H7ZM12 86H14V89H12ZM3 92H11V98H3ZM6 93V97L9 95Z" />
        <path d="M7 25H9M7 61H9M7 81H9" />
        <circle cx="13" cy="102" r="1.500" />
      </svg>
    </div>
  );
}

function CommandLine() {
  return (
    <div className="absolute bottom-0 left-[175px] right-[178px] flex h-[13px] bg-[#b9b9bb]">
      <div className="w-[27px] flex items-center gap-1 pl-[2px] bg-linear-to-r from-[#5a5a5a] to-[#3e3e3e]">
        <span className="w-[2px] h-2 bg-[#777]" />
        <button aria-label="Close" className="size-[7px]"><Icon className="size-[7px]"><path d="M2 2L10 10M10 2L2 10" stroke="#eee" strokeWidth="2" /></Icon></button>
        <button aria-label="Customize" className="size-[7px]"><Icon className="size-[7px]"><path d="M5 5L11 11" stroke="#eee" strokeWidth="2.500" /><path d="M5 1A3 3 0 1 0 6 5M2 2L4 4" stroke="#eee" strokeWidth="1.500" /></Icon></button>
      </div>
      <div className="flex-1 flex items-center gap-[3px] pl-[2px] pr-[2px]">
        <Icon className="size-2"><path d="M1 2H11V10H1Z" stroke="#777" /><path d="M3 4L5 6L3 8M6 8H9" stroke="#555" /></Icon>
        <Caret className="text-[#666]" />
        <input aria-label="Command" placeholder="Type a command" className="flex-1 h-[10px] italic font-['Liberation_Mono',monospace] placeholder:text-[#666] placeholder:opacity-100" />
        <Caret className="rotate-180 text-[#333]" />
      </div>
    </div>
  );
}

function Canvas() {
  return (
    <main className="relative flex-1 min-w-0 overflow-hidden bg-[#212830] border-r border-[#1a1e24]">
      <Drawing />
      <div className="absolute top-[2px] left-0 text-[#d2d4d6]">[−][Top][2D Wireframe]</div>
      <div className="absolute right-[3px] top-1 flex gap-[2px]">
        <button aria-label="Minimize drawing" className="size-2"><Icon className="size-[7px]"><path d="M2 9H10" stroke="#fff" strokeWidth="2" /></Icon></button>
        <button aria-label="Restore drawing" className="size-2"><Icon className="size-[7px]"><path d="M2 5H8V11H2ZM4 4V1H11V8H9" stroke="#fff" strokeWidth="1.500" /></Icon></button>
        <button aria-label="Close drawing" className="size-2"><Icon className="size-[7px]"><path d="M2 2L10 10M10 2L2 10" stroke="#fff" strokeWidth="2" /></Icon></button>
      </div>
      <ViewCube />
      <NavBar />
      <CommandLine />
    </main>
  );
}

/* ---------- properties palette ---------- */

type Row = { label: string; value: string; swatch?: string; dim?: boolean };

const groups: { title: string; rows: Row[] }[] = [
  {
    title: "General",
    rows: [
      { label: "Color", value: "ByLayer", swatch: "color" },
      { label: "Layer", value: "Centreline" },
      { label: "Linetype", value: "ByLa...", swatch: "dash" },
      { label: "Linety...", value: "1" },
      { label: "Linewe...", value: "ByLa...", swatch: "line" },
      { label: "Transp...", value: "ByLayer" },
      { label: "Thickn...", value: "0" },
    ],
  },
  { title: "3D Visualization", rows: [{ label: "Material", value: "ByLayer" }] },
  {
    title: "Plot style",
    rows: [
      { label: "Plot st...", value: "ByColor", dim: true },
      { label: "Plot st...", value: "None" },
      { label: "Plot ta...", value: "Model", dim: true },
      { label: "Plot ta...", value: "Not available", dim: true },
    ],
  },
  {
    title: "View",
    rows: [
      { label: "Center X", value: "2398.3039", dim: true },
      { label: "Center Y", value: "704.7412", dim: true },
      { label: "Center Z", value: "0", dim: true },
      { label: "Height", value: "315.975", dim: true },
      { label: "Width", value: "697.2613", dim: true },
    ],
  },
  {
    title: "Misc",
    rows: [
      { label: "Annot...", value: "1:1" },
      { label: "UCS ic...", value: "Yes" },
      { label: "UCS ic...", value: "Yes" },
      { label: "UCS p...", value: "Yes" },
      { label: "UCS N...", value: "" },
      { label: "Visual...", value: "2D Wirefra..." },
    ],
  },
];

function PropertiesPalette() {
  return (
    <aside className="w-[90px] shrink-0 bg-[#595959] pl-1 text-gray-200">
      <h2 className="h-[17px] pl-1 leading-[10px]">PROPERTIES</h2>
      <div className="flex items-center gap-[5px] h-[12px]">
        <div className="relative flex items-center w-[45px]">
          <select aria-label="Selection" className="appearance-none w-full h-[10px] bg-[#4b4b4b] border border-[#6e6e6e]">
            <option>No selection</option>
          </select>
          <span className="absolute right-px"><Caret /></span>
        </div>
        <button aria-label="Toggle pickadd"><Icon className="size-2"><path d="M1 4H7V10H1Z" fill="#fff" stroke="#26a" /><circle cx="8" cy="4" r="3" fill="#3f9e6a" stroke="none" /></Icon></button>
        <button aria-label="Select objects"><Icon className="size-2"><path d="M6 1V11M1 6H11" stroke="#ddd" /><path d="M4 4H8V8H4Z" fill="#595959" /></Icon></button>
        <button aria-label="Quick select"><Icon className="size-2"><path d="M5 1V9M1 5H9" stroke="#ddd" /><path d="M9 1L6 6H8L6 11L11 5H9Z" fill="#f2b75c" stroke="none" /></Icon></button>
      </div>
      <div className="w-[77px] mt-px pl-px">
        {groups.map((group) => (
          <section key={group.title}>
            <h3 className="flex items-center justify-between h-[10px] pl-1 pr-1 bg-[#424242] font-bold text-white">
              {group.title}
              <span className="w-1 h-px bg-white" />
            </h3>
            <dl>
              {group.rows.map((row, i) => (
                <div key={i} className="flex items-center h-[10px] pl-3 border-r border-[#686868] whitespace-nowrap">
                  <dt className="w-[27px] shrink-0">{row.label}</dt>
                  <dd className={`flex flex-1 items-center gap-[2px] overflow-hidden ${row.dim ? "text-[#b0b0b0]" : "text-gray-100"}`}>
                    {row.swatch === "color" && <span className="size-[6px] shrink-0 bg-[#e51400] border border-[#8a1a10]" />}
                    {row.swatch === "dash" && <svg viewBox="0 0 16 1" className="w-4 h-px shrink-0"><path d="M0 .500H16" stroke="#ddd" strokeDasharray="11 3 2 1" /></svg>}
                    {row.swatch === "line" && <span className="w-4 h-px shrink-0 bg-gray-300" />}
                    {row.value}
                  </dd>
                </div>
              ))}
            </dl>
          </section>
        ))}
      </div>
    </aside>
  );
}

/* ---------- status bar ---------- */

const layoutTabs = ["Model", "Layout1", "Layout2"];

function StatusButton({ active = false, label, children }: { active?: boolean; label: string; children: ReactNode }) {
  return (
    <button aria-label={label} className={`size-3 shrink-0 flex items-center justify-center ${active ? "bg-[#5f92cc]" : ""}`}>
      <Icon className="size-[10px]">{children}</Icon>
    </button>
  );
}

const StatusCaret = () => <span className="w-2 shrink-0 flex justify-center"><Caret /></span>;

function StatusBar() {
  return (
    <footer className="flex h-[14px] items-center bg-[#393939] text-gray-300">
      <div className="flex flex-1 items-start h-full pl-[2px]">
        {layoutTabs.map((tab, i) => (
          <button
            key={tab}
            className={`w-8 h-[9px] leading-[9px] [clip-path:polygon(0_0,100%_0,88%_100%,12%_100%)] ${i === 0 ? "bg-[#8a8a8a] text-white font-bold" : "bg-[#5a5a5a] text-gray-300"}`}
          >
            {tab}
          </button>
        ))}
        <button aria-label="New layout" className="w-3 h-[9px] flex items-center justify-center bg-[#4e4e4e]">
          <svg viewBox="0 0 5 5" className="size-[5px]"><path d="M2.500 0V5M0 2.500H5" stroke="#ddd" /></svg>
        </button>
      </div>
      <div className="flex items-center w-[282px] h-full bg-[#4d4d4d] border border-[#666]">
        <button className="w-[25px] text-center text-white">MODEL</button>
        <div className="flex flex-1 items-center justify-between pr-px">
          <StatusButton active label="Grid"><path d="M1 4H11M1 8H11M4 1V11M8 1V11" stroke="#fff" /></StatusButton>
          <StatusButton label="Snap"><path d="M1 2H11M1 6H11M1 10H11" strokeDasharray="2 2" strokeWidth="1.500" /></StatusButton>
          <StatusCaret />
          <StatusButton label="Ortho"><path d="M2 1V10H11M2 7H5V10" /></StatusButton>
          <StatusButton active label="Polar"><circle cx="6" cy="6" r="4.500" stroke="#fff" /><path d="M6 6L11 1M6 6H11" stroke="#fff" /></StatusButton>
          <StatusCaret />
          <StatusButton label="Isodraft"><path d="M6 0V12" stroke="#6abf5a" /><path d="M2 2L10 10" stroke="#d66" /></StatusButton>
          <StatusCaret />
          <StatusButton active label="Tracking"><path d="M10 1L2 9H11" stroke="#fff" /></StatusButton>
          <StatusButton active label="Object snap"><path d="M3 3H10V10H3Z" stroke="#fff" /><path d="M1 1H5V5H1Z" fill="#5f92cc" stroke="#fff" /></StatusButton>
          <StatusCaret />
          <StatusButton active label="Annotation visibility"><path d="M5 1V5L1 11M5 5L10 11" stroke="#fff" strokeWidth="2" /><circle cx="9" cy="3" r="2" stroke="#fff" /></StatusButton>
          <StatusButton label="Auto scale"><path d="M5 2V6L2 11M5 6L9 11M8 1L11 4" stroke="#fff" strokeWidth="1.600" /></StatusButton>
          <StatusButton label="Annotation scale"><path d="M6 1V6L2 11M6 6L10 11" stroke="#fff" strokeWidth="1.800" /></StatusButton>
          <span>1:1</span>
          <StatusCaret />
          <StatusButton label="Workspace"><circle cx="6" cy="6" r="3" stroke="#eee" strokeWidth="2" /><path d="M6 0V2M6 10V12M0 6H2M10 6H12M2 2L3 3M9 9L10 10M10 2L9 3M3 9L2 10" stroke="#eee" strokeWidth="1.500" /></StatusButton>
          <StatusCaret />
          <StatusButton label="Monitor"><path d="M6 1V11M1 6H11" stroke="#eee" strokeWidth="1.500" /></StatusButton>
          <StatusButton label="Isolate"><path d="M1 2H5V6H1ZM7 2H11V5H7Z" /><circle cx="7" cy="9" r="2" /></StatusButton>
          <StatusButton label="Performance"><path d="M2 1H8V10H2Z" fill="#7fb8e8" stroke="none" /><path d="M3 8H11V11H3Z" fill="#f2d06a" stroke="none" /><circle cx="9" cy="7" r="2" fill="#6abf5a" stroke="none" /></StatusButton>
          <StatusButton label="Clean screen"><path d="M1 2H11V10H1ZM7 4H9V6M3 8H5" /></StatusButton>
          <StatusButton label="Customization"><path d="M1 2H11M1 6H11M1 10H11" stroke="#eee" strokeWidth="1.500" /></StatusButton>
        </div>
      </div>
    </footer>
  );
}

function Watermark() {
  return (
    <a href="#" className="absolute left-9 bottom-5 w-[130px] h-10 flex items-center gap-1 pl-[6px] rounded-full bg-[#05a8ff] text-white">
      <svg viewBox="0 0 30 30" className="size-[30px] shrink-0" aria-hidden="true">
        <circle cx="15" cy="15" r="15" fill="#fff" />
        <path d="M4 8Q8 1 16 2Q24 3 27 10Q26 13 22 11L17 8L13 11L7 14L3 12Z" fill="#c3c5c8" />
        <path d="M9 6L12 4L15 6L12 8ZM19 5L23 8L20 9Z" fill="#e2e3e5" />
        <path d="M8 29V17Q10 13 15 10Q20 13 22 17V29Q15 31 8 29Z" fill="#05a8ff" />
        <path d="M13 16H14.700V17.700H13ZM15.300 16H17V17.700H15.300ZM13 18.300H14.700V20H13ZM15.300 18.300H17V20H15.300Z" fill="#fff" />
      </svg>
      <span className="flex flex-col pt-[2px] font-['Lato',sans-serif]">
        <span className="flex items-center text-[14px] leading-[17px]">
          M
          <svg viewBox="0 0 9 10" className="w-[9px] h-[10px]" aria-hidden="true"><path d="M4 0Q10 5 2 10Q6 6 4 0Z" fill="#f3d3b0" /></svg>
          ONARCH
        </span>
        <span className="text-[6px] leading-[7px] text-[#bfe8ff]">3D OBJECT SOURCE</span>
      </span>
    </a>
  );
}

export default function App() {
  return (
    <div className="relative h-screen flex flex-col bg-black pt-[9px] pb-[9px] border-t border-[#c4cccc] overflow-hidden font-['Open_Sans','Noto_Sans',sans-serif] text-[6px] leading-[10px]">
      <Header />
      <Ribbon />
      <FileTabs />
      <div className="flex flex-1 min-h-0">
        <Canvas />
        <PropertiesPalette />
      </div>
      <StatusBar />
      <Watermark />
      <div className="absolute right-[6px] bottom-4 w-[18px] h-[15px] flex items-center justify-center gap-[3px] bg-black/30" aria-hidden="true">
        <span className="w-[2px] h-2 bg-[#777]" />
        <span className="w-[2px] h-2 bg-[#777]" />
      </div>
    </div>
  );
}
